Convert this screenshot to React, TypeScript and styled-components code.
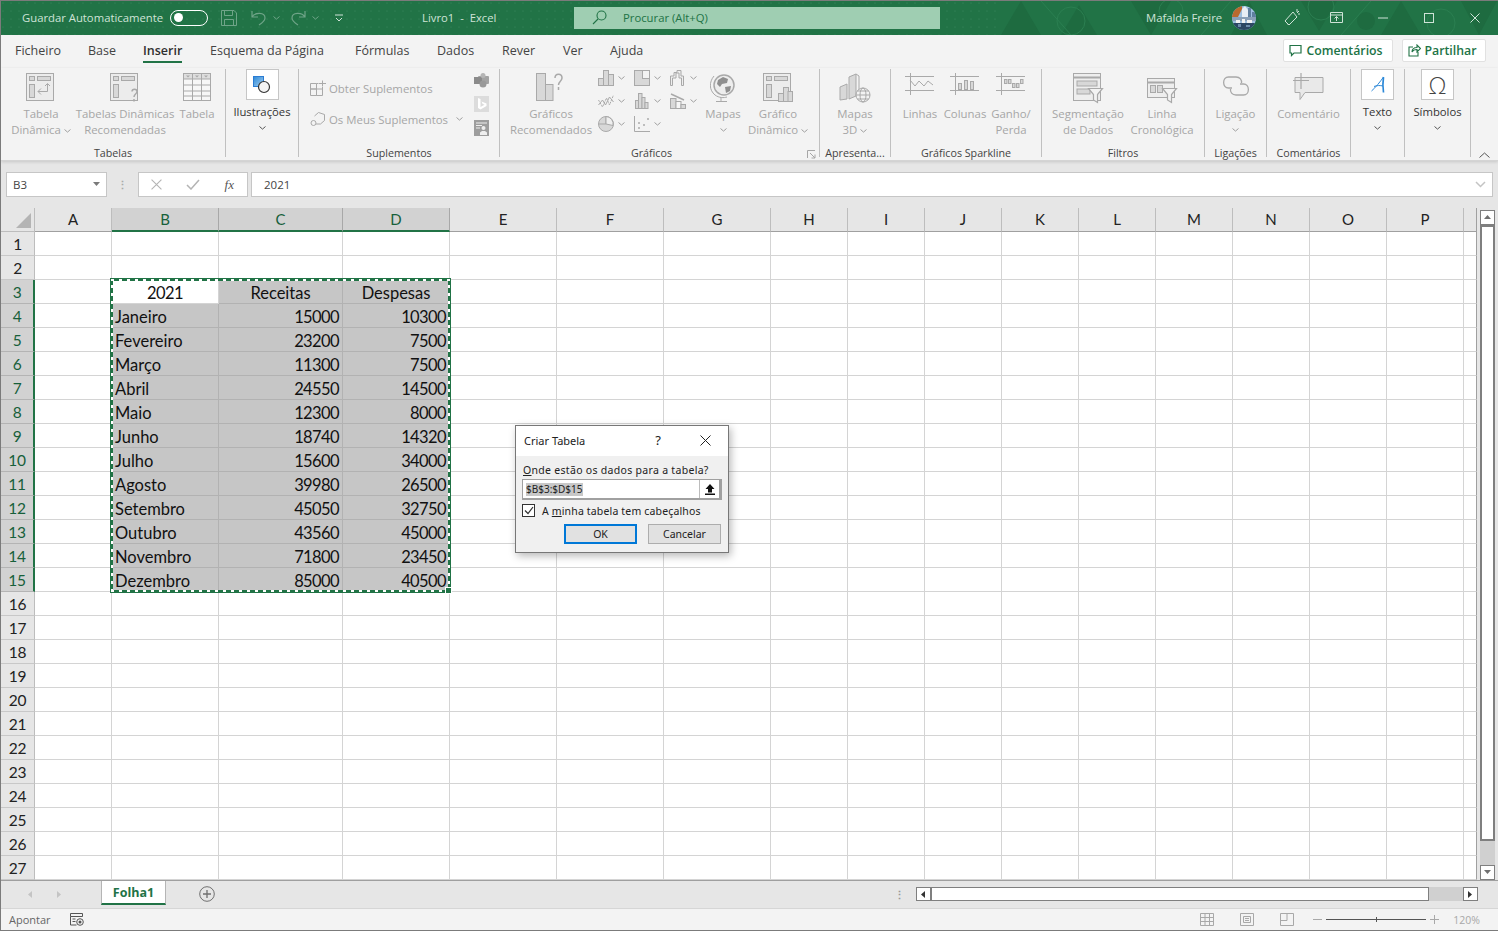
import React from "react";
import styled, { createGlobalStyle } from "styled-components";

const GREEN = "#217346";
const G = "#a9a9a9";
const L = "#d8d8d8";
const UI = `"Open Sans", "Noto Sans", "Liberation Sans", sans-serif`;
const CELL = `Lato, "Liberation Sans", sans-serif`;

const Global = createGlobalStyle`
  html, body { margin: 0; padding: 0; background: #fff; overflow: hidden; }
  * { box-sizing: border-box; }
  svg { display: block; flex: none; }
`;

const Frame = styled.div`
  position: relative;
  width: 1498px;
  height: 931px;
  display: flex;
  flex-direction: column;
  border-top: 1px solid #7b7b7b;
  border-left: 1px solid #7b7b7b;
  border-bottom: 1px solid #7b7b7b;
  font-family: ${UI};
  overflow: hidden;
`;

/* title bar */
const TitleBar = styled.div`
  position: relative;
  flex: none;
  height: 34px;
  background: ${GREEN};
  display: flex;
  align-items: center;
  color: #cfe3d7;
  font-size: 11.3px;
`;
const Texture = styled.svg`
  position: absolute;
  inset: 0;
  width: 100%;
  height: 100%;
`;
const TitleSlot = styled.div<{ $w: number }>`
  position: relative;
  flex: none;
  width: ${(p) => p.$w}px;
  display: flex;
  align-items: center;
  gap: 6px;
  white-space: pre;
  padding-bottom: 1px;
`;
const Toggle = styled.div`
  width: 38px;
  height: 16px;
  border: 1.5px solid #fff;
  border-radius: 8px;
  display: flex;
  align-items: center;
  padding-left: 3px;
  &::before {
    content: "";
    width: 9px;
    height: 9px;
    border-radius: 50%;
    background: #fff;
  }
`;
const SearchBox = styled.div`
  position: relative;
  flex: none;
  width: 366px;
  height: 22px;
  background: #9fceb2;
  color: ${GREEN};
  display: flex;
  align-items: center;
  gap: 16px;
  padding: 0 0 1px 18px;
`;

/* tabs */
const TabRow = styled.div`
  flex: none;
  height: 33px;
  background: #f3f3f3;
  display: flex;
  align-items: flex-start;
  padding-left: 14px;
`;
const Tab = styled.div<{ $w: number }>`
  flex: none;
  width: ${(p) => p.$w}px;
  height: 33px;
  font-size: 12.5px;
  color: #444;
`;
const TabLabel = styled.span<{ $active?: boolean }>`
  display: inline-block;
  height: 28px;
  line-height: 31px;
  font-weight: ${(p) => (p.$active ? 600 : 400)};
  color: ${(p) => (p.$active ? "#2f2f2f" : "#444")};
  border-bottom: ${(p) => (p.$active ? `2.5px solid ${GREEN}` : "none")};
`;
const TabActions = styled.div`
  margin-left: auto;
  display: flex;
  gap: 9px;
  padding: 4px 12px 0 0;
`;
const TabAction = styled.div<{ $w: number }>`
  width: ${(p) => p.$w}px;
  height: 23px;
  background: #fff;
  border: 1px solid #e1e1e1;
  border-radius: 2px;
  color: ${GREEN};
  font-size: 12.3px;
  font-weight: 600;
  display: flex;
  align-items: center;
  justify-content: center;
  gap: 4px;
  padding-right: 4px;
`;

/* ribbon */
const Ribbon = styled.div`
  flex: none;
  height: 93px;
  background: #f3f3f3;
  display: flex;
  padding-top: 1px;
  border-bottom: 1px solid #d4d4d4;
  box-shadow: 0 1px 3px rgba(0, 0, 0, 0.14);
  z-index: 2;
`;
const Group = styled.div<{ $w: number; $plain?: boolean }>`
  position: relative;
  flex: none;
  width: ${(p) => p.$w}px;
  height: 88px;
  display: flex;
  flex-direction: column;
  border-right: ${(p) => (p.$plain ? "none" : "1px solid #c0c0c0")};
`;
const GroupBody = styled.div<{ $pl?: number }>`
  flex: none;
  height: 77px;
  display: flex;
  padding-left: ${(p) => p.$pl ?? 0}px;
`;
const GroupLabel = styled.div<{ $pr?: number }>`
  height: 11px;
  line-height: 14px;
  font-size: 10.7px;
  color: #444;
  text-align: center;
  white-space: nowrap;
  padding-right: ${(p) => p.$pr ?? 0}px;
`;
const Launcher = styled.svg`
  position: absolute;
  right: 3px;
  bottom: -2px;
`;
const BigButton = styled.div<{ $w: number }>`
  flex: none;
  width: ${(p) => p.$w}px;
  display: flex;
  flex-direction: column;
  align-items: center;
`;
const IconSlot = styled.div`
  height: 37px;
  display: flex;
  align-items: flex-start;
  justify-content: center;
  padding-top: 4px;
`;
const BigText = styled.div`
  font-size: 11.4px;
  line-height: 16px;
  color: #a6a6a6;
  text-align: center;
  white-space: nowrap;
  svg { display: inline-block; margin-left: 3px; vertical-align: middle; }
`;
const ChevRow = styled.div`
  height: 16px;
  display: flex;
  align-items: center;
  justify-content: center;
`;
const BoxedButton = styled.div<{ $w: number }>`
  flex: none;
  width: ${(p) => p.$w}px;
  display: flex;
  flex-direction: column;
  align-items: center;
  color: #333;
  font-size: 11.3px;
`;
const WhiteBox = styled.div`
  width: 33px;
  height: 31px;
  background: #fff;
  border: 1px solid #c6c6c6;
  display: flex;
  align-items: center;
  justify-content: center;
  margin-bottom: 4px;
  font-family: ${UI};
  font-weight: 300;
  font-size: 23px;
  color: #444;
`;
const BoxedText = styled.div`
  line-height: 16px;
  white-space: nowrap;
`;
const AddinList = styled.div`
  flex: 1;
  display: flex;
  flex-direction: column;
  gap: 15px;
  padding: 11px 0 0 11px;
`;
const AddinRow = styled.div`
  height: 16px;
  display: flex;
  align-items: center;
  gap: 3px;
  font-size: 11.4px;
  color: #a6a6a6;
  white-space: nowrap;
`;
const AddinSide = styled.div`
  flex: none;
  width: 25px;
  display: flex;
  flex-direction: column;
  gap: 8px;
  padding-top: 4px;
`;
const MiniGrid = styled.div`
  flex: none;
  width: 106px;
  height: 72px;
  margin-top: -3px;
  display: grid;
  grid-template-columns: repeat(3, 36px);
  grid-auto-rows: 23px;
`;
const MiniChart = styled.div`
  display: flex;
  align-items: center;
  gap: 4px;
`;
const CollapseTab = styled.div`
  flex: 1;
  display: flex;
  align-items: flex-end;
  justify-content: flex-end;
  padding: 0 8px 0 0;
  height: 89px;
`;

/* formula bar */
const FormulaRow = styled.div`
  flex: none;
  height: 47px;
  background: #e6e6e6;
  display: flex;
  align-items: flex-start;
  padding: 11px 5px 0 5px;
`;
const FormulaBox = styled.div<{ $w?: number }>`
  flex: ${(p) => (p.$w ? "none" : "1")};
  width: ${(p) => (p.$w ? `${p.$w}px` : "auto")};
  height: 25px;
  background: #fff;
  border: 1px solid #c6c6c6;
  display: flex;
  align-items: center;
  justify-content: space-between;
  font-size: 11.5px;
  color: #444;
  padding: 0 6px;
`;
const Grip = styled.div`
  flex: none;
  width: 31px;
  display: flex;
  justify-content: center;
  align-items: center;
  height: 25px;
  color: #aaa;
  font-size: 11px;
  font-weight: 700;
`;
const FxButtons = styled(FormulaBox)`
  margin-right: 3px;
  padding: 0 13px 0 12px;
`;
const FxMark = styled.i`
  font-family: "Liberation Serif", serif;
  font-size: 13px;
  color: #555;
`;
const FormulaText = styled.span`
  padding-left: 6px;
  font-size: 11.5px;
`;

/* sheet */
const Main = styled.div`
  flex: none;
  height: 672px;
  display: flex;
  background: #e6e6e6;
`;
const Sheet = styled.div`
  position: relative;
  flex: none;
  width: 1476px;
  display: grid;
  grid-template-columns: 34px 77px 107px 124px 107px 107px 107px 107px repeat(9, 77px) 1fr;
  grid-auto-rows: 24px;
  background: #fff;
  font-family: ${CELL};
  font-size: 16.5px;
  color: #111;
`;
const Corner = styled.div`
  background: #e6e6e6;
  border-right: 1px solid #bdbdbd;
  border-bottom: 1px solid #bdbdbd;
  display: flex;
  align-items: flex-end;
  justify-content: flex-end;
  padding: 0 3px 3px 0;
`;
const ColHead = styled.div<{ $on?: boolean }>`
  background: ${(p) => (p.$on ? "#d2d2d2" : "#e6e6e6")};
  color: ${(p) => (p.$on ? "#17603a" : "#222")};
  border-right: 1px solid ${(p) => (p.$on ? "#a8a8a8" : "#bdbdbd")};
  border-bottom: ${(p) => (p.$on ? `2px solid ${GREEN}` : "1px solid #a0a0a0")};
  display: flex;
  align-items: center;
  justify-content: center;
  padding-bottom: 1px;
  font-size: 15px;
`;
const ColFill = styled.div`
  background: #e6e6e6;
  border-bottom: 1px solid #a0a0a0;
  border-right: 1px solid #a0a0a0;
`;
const RowHead = styled.div<{ $on?: boolean }>`
  background: ${(p) => (p.$on ? "#d2d2d2" : "#e6e6e6")};
  color: ${(p) => (p.$on ? "#17603a" : "#222")};
  border-right: ${(p) => (p.$on ? `2px solid ${GREEN}` : "1px solid #bdbdbd")};
  border-bottom: 1px solid ${(p) => (p.$on ? "#b4b4b4" : "#c8c8c8")};
  display: flex;
  align-items: center;
  justify-content: center;
  font-size: 15.5px;
  letter-spacing: -0.3px;
`;
const Cell = styled.div<{ $sel?: boolean; $align?: string; $num?: boolean }>`
  background: ${(p) => (p.$sel ? "#c6c6c6" : "#fff")};
  border-right: 1px solid ${(p) => (p.$sel ? "#b2b2b2" : "#d4d4d4")};
  border-bottom: 1px solid ${(p) => (p.$sel ? "#b2b2b2" : "#d4d4d4")};
  display: flex;
  align-items: center;
  justify-content: ${(p) => p.$align ?? "flex-start"};
  padding: 2px 3px 0;
  white-space: nowrap;
  letter-spacing: ${(p) => (p.$num ? "-0.6px" : "0")};
`;
const CellFill = styled.div`
  background: #fff;
  border-right: 1px solid #a0a0a0;
  border-bottom: 1px solid #d4d4d4;
`;
const Ants = styled.div`
  position: absolute;
  left: 109px;
  top: 70px;
  width: 341px;
  height: 315px;
  border: 3px solid ${GREEN};
  pointer-events: none;
  &::before {
    content: "";
    position: absolute;
    inset: -2px;
    background:
      repeating-linear-gradient(90deg, #fff 0 3px, transparent 3px 8px) top left / 100% 2px no-repeat,
      repeating-linear-gradient(90deg, #fff 0 3px, transparent 3px 8px) bottom left / 100% 2px no-repeat,
      repeating-linear-gradient(0deg, #fff 0 3px, transparent 3px 8px) top left / 2px 100% no-repeat,
      repeating-linear-gradient(0deg, #fff 0 3px, transparent 3px 8px) top right / 2px 100% no-repeat;
  }
  &::after {
    content: "";
    position: absolute;
    right: -4px;
    bottom: -4px;
    width: 5px;
    height: 5px;
    background: ${GREEN};
    border: 1px solid #fff;
  }
`;

/* scrollbars */
const VScroll = styled.div`
  flex: none;
  width: 21px;
  display: flex;
  flex-direction: column;
  padding: 2px 0 0 3px;
`;
const ScrollBtn = styled.div`
  flex: none;
  width: 15px;
  height: 15px;
  background: #fff;
  border: 1px solid #7f7f7f;
  display: flex;
  align-items: center;
  justify-content: center;
`;
const VThumb = styled.div`
  flex: none;
  width: 15px;
  height: 616px;
  background: #fff;
  border: 2px solid #7f7f7f;
  border-top-width: 2px;
`;
const VTrack = styled.div`
  flex: none;
  width: 15px;
  height: 24px;
  background: #d0d0d0;
`;
const SheetBar = styled.div`
  flex: none;
  height: 28px;
  background: #e6e6e6;
  border-top: 1px solid #9f9f9f;
  display: flex;
  align-items: flex-start;
`;
const SheetNav = styled.div`
  flex: none;
  width: 100px;
  height: 26px;
  display: flex;
  align-items: center;
  gap: 22px;
  padding-left: 26px;
`;
const SheetTab = styled.div`
  flex: none;
  width: 65px;
  height: 24px;
  background: #fff;
  border: 1px solid #b5b5b5;
  border-top: none;
  border-bottom: 2px solid ${GREEN};
  color: ${GREEN};
  font-size: 12.5px;
  font-weight: 700;
  display: flex;
  align-items: center;
  justify-content: center;
`;
const AddSheet = styled.div`
  flex: none;
  width: 84px;
  height: 26px;
  display: flex;
  align-items: center;
  padding-left: 33px;
`;
const HScrollArea = styled.div`
  flex: 1;
  display: flex;
  align-items: center;
  height: 26px;
  padding: 0 20px 0 0;
`;
const Splitter = styled.div`
  margin-left: auto;
  width: 22px;
  color: #999;
  font-size: 11px;
  font-weight: 700;
`;
const HBtn = styled(ScrollBtn)`
  height: 14px;
`;
const HThumb = styled.div`
  flex: none;
  width: 498px;
  height: 14px;
  background: #fff;
  border: 1px solid #7f7f7f;
`;
const HTrack = styled.div`
  flex: none;
  width: 34px;
  height: 14px;
  background: #d0d0d0;
`;

/* status bar */
const StatusBar = styled.div`
  flex: 1;
  background: #f3f3f3;
  border-top: 1px solid #d6d6d6;
  display: flex;
  align-items: center;
  padding: 0 0 0 8px;
  font-size: 11px;
  color: #666;
`;
const StatusText = styled.span`
  width: 61px;
`;
const StatusRight = styled.div`
  margin-left: auto;
  display: flex;
  align-items: center;
  padding-right: 18px;
  font-size: 10.5px;
  color: #a8a8a8;
`;
const ViewIcons = styled.div`
  display: flex;
  gap: 26px;
  margin-right: 19px;
`;
const Zoom = styled.div`
  display: flex;
  align-items: center;
  gap: 4px;
  margin-right: 14px;
`;
const ZoomTrack = styled.div`
  position: relative;
  width: 100px;
  height: 1px;
  background: #555;
  &::after {
    content: "";
    position: absolute;
    left: 50px;
    top: -2px;
    width: 1px;
    height: 5px;
    background: #555;
  }
`;

/* dialog */
const Dialog = styled.div`
  position: absolute;
  left: 514px;
  top: 424px;
  width: 214px;
  height: 128px;
  background: #f0f0f0;
  border: 1px solid #777;
  box-shadow: 2px 3px 8px rgba(0, 0, 0, 0.28);
  display: flex;
  flex-direction: column;
  font-family: "Noto Sans", "Open Sans", sans-serif;
  font-size: 10.5px;
  color: #222;
  z-index: 5;
`;
const DialogHead = styled.div`
  height: 30px;
  background: #fff;
  display: flex;
  align-items: center;
  padding: 0 0 2px 8px;
  font-size: 11px;
`;
const HelpMark = styled.span`
  margin-left: auto;
  margin-right: 39px;
  font-size: 13px;
`;
const CloseMark = styled.svg`
  margin-right: 17px;
`;
const DialogBody = styled.div`
  padding: 6px 7px 0 6px;
  display: flex;
  flex-direction: column;
`;
const DialogLabel = styled.div`
  padding-left: 1px;
  height: 17px;
  line-height: 16px;
  letter-spacing: 0.3px;
  white-space: nowrap;
`;
const RangeField = styled.div`
  flex: none;
  width: 200px;
  height: 21px;
  background: #fff;
  border: 1px solid #a0a0a0;
  border-right-width: 3px;
  border-bottom-width: 2px;
  display: flex;
  align-items: center;
  padding-left: 3px;
`;
const RangeText = styled.span`
  background: #c8c8c8;
  font-size: 10px;
  line-height: 13px;
`;
const RangeBtn = styled.div`
  margin-left: auto;
  width: 20px;
  height: 100%;
  border-left: 1px solid #bcbcbc;
  display: flex;
  align-items: center;
  justify-content: center;
`;
const CheckRow = styled.div`
  display: flex;
  align-items: center;
  gap: 7px;
  margin-top: 3px;
  height: 15px;
  letter-spacing: 0.16px;
  white-space: nowrap;
`;
const CheckBox = styled.div`
  width: 13px;
  height: 13px;
  background: #fff;
  border: 1px solid #333;
  display: flex;
  align-items: center;
  justify-content: center;
`;
const DialogButtons = styled.div`
  display: flex;
  justify-content: flex-end;
  gap: 11px;
  margin-top: 6px;
`;
const DlgButton = styled.div<{ $primary?: boolean }>`
  width: 73px;
  height: 20px;
  background: #e1e1e1;
  border: ${(p) => (p.$primary ? "2px solid #0078d7" : "1px solid #adadad")};
  display: flex;
  align-items: center;
  justify-content: center;
`;
const Key = styled.u`
  text-decoration: underline;
`;

/* icons */
const Chev = ({ c = "#a0a0a0" }: { c?: string }) => (
  <svg width="7" height="4" viewBox="0 0 7 4" style={{ display: "inline-block" }}>
    <path d="M.5.5l3 2.6 3-2.6" fill="none" stroke={c} />
  </svg>
);
const PivotBase = ({ children }: { children?: React.ReactNode }) => (
  <svg width="30" height="30" viewBox="0 0 30 30" fill="none" stroke={G}>
    <rect x=".5" y=".5" width="27" height="27" fill="#ececec" />
    <rect x="3.5" y="3.5" width="5" height="4" fill={L} />
    <rect x="11.5" y="3.5" width="13" height="4" fill={L} />
    <rect x="3.5" y="11.5" width="5" height="13" fill={L} />
    {children}
  </svg>
);
const PivotIcon = () => (
  <PivotBase>
    <path d="M21.5 11v7.5H12M15 15.5l-3 3 3 3M19 13l2.5-2.5L24 13" />
  </PivotBase>
);
const RecIcon = () => (
  <PivotBase>
    <path d="M22 18.500c0-3 5-3 5 0 0 2.500-3 2.500-3 5.500M24 26v2.500" strokeWidth="1.500" />
  </PivotBase>
);
const TableIcon = () => (
  <svg width="28" height="28" viewBox="0 0 28 28" fill="none" stroke={G}>
    <rect x=".5" y=".5" width="27" height="27" fill="#f7f7f7" />
    <rect x=".5" y=".5" width="27" height="5.500" fill="#dedede" />
    <path d="M.5 12h27M.5 18h27M.5 23h27M9.500 0v28M18.500 0v28" />
    <path d="M3 2.500h4L5 4.500zM12 2.500h4l-2 2zM21 2.500h4l-2 2z" fill={G} stroke="none" />
  </svg>
);
const ShapesIcon = () => (
  <svg width="18" height="18" viewBox="0 0 18 18">
    <defs>
      <linearGradient id="sq" x1="0" y1="0" x2="1" y2="1">
        <stop offset="0" stopColor="#2b88d8" />
        <stop offset="1" stopColor="#a6d0ef" />
      </linearGradient>
    </defs>
    <rect x=".5" y=".5" width="10" height="10" fill="url(#sq)" stroke="#2b7cd3" />
    <circle cx="11" cy="11" r="5.500" fill="#f3f3f3" stroke="#333" strokeWidth="1.200" />
  </svg>
);
const StoreIcon = () => (
  <svg width="16" height="16" viewBox="0 0 16 16" fill="none" stroke={G}>
    <path d="M.5 3.500h6v5.500h-6zM.5 9h6v6.500h-6zM6.500 9h6v6.500h-6zM6.500 3.500h2M12.500 9V7M12.500 .5v6M9 3.500h7" />
  </svg>
);
const MyAddinIcon = () => (
  <svg width="16" height="16" viewBox="0 0 16 16" fill="none" stroke={G}>
    <path d="M4.500 5l4-3.500 6 2v6l-4 3.500H6" />
    <circle cx="3.500" cy="12" r="2.500" />
  </svg>
);
const VisioIcon = () => (
  <svg width="15" height="15" viewBox="0 0 15 15">
    <rect x="4" y="3" width="11" height="8" rx="1" fill="#a3a3a3" />
    <rect x="0" y="4" width="8" height="7" fill="#8a8a8a" />
    <circle cx="9" cy="11" r="3.500" fill="#999" />
    <circle cx="9" cy="2.500" r="2.500" fill="#b5b5b5" />
  </svg>
);
const BingIcon = () => (
  <svg width="15" height="16" viewBox="0 0 15 16">
    <rect width="15" height="16" fill="#dcdcdc" />
    <path d="M4 2l2.500 1v8l4-2.300-2-1L7.500 5.500l5 2V10l-6 3.500L4 12z" fill="#fff" />
  </svg>
);
const PeopleIcon = () => (
  <svg width="15" height="16" viewBox="0 0 15 16">
    <rect width="15" height="16" fill="#9d9d9d" />
    <path d="M2 3h11M2 5.500h6M2 8h4" stroke="#eee" />
    <circle cx="9.500" cy="8" r="2" fill="#eee" />
    <path d="M6 15v-2.500l2-1.500h3l2 1.500V15z" fill="#eee" />
  </svg>
);
const RecChartIcon = () => (
  <svg width="31" height="30" viewBox="0 0 31 30" fill={L} stroke={G}>
    <rect x=".5" y=".5" width="9" height="27" />
    <rect x="9.500" y="11.500" width="7.500" height="16" />
    <path d="M19 5c0-5 7-5 7 0 0 3-3.500 3.500-3.500 7M22.500 14v3" fill="none" strokeWidth="1.500" />
  </svg>
);
const Mini = ({ kind }: { kind: number }) => {
  const shapes: Record<number, React.ReactNode> = {
    0: (
      <g fill={L} stroke={G}>
        <rect x=".5" y="8.500" width="5" height="7" />
        <rect x="5.500" y=".5" width="5" height="15" />
        <rect x="10.500" y="4.500" width="5" height="11" />
      </g>
    ),
    1: (
      <g fill={L} stroke={G}>
        <rect x=".5" y=".5" width="15" height="15" />
        <rect x="8.500" y=".5" width="7" height="8" fill="#f3f3f3" />
      </g>
    ),
    2: (
      <path d="M.5 15.500V6h3.500V2.500h3V.5h4V6h2.500v9.500h-2V8H9V3H6v5H2.500v7.500z" fill="#eee" stroke={G} />
    ),
    3: (
      <g fill="none" stroke={G}>
        <path d="M.5 12l4-5 3 5 4-8 4 5" />
        <path d="M.5 7l4 7 4-9 3 7 4-10" strokeDasharray="2 1" />
      </g>
    ),
    4: (
      <g fill={L} stroke={G}>
        <rect x="1.500" y="7.500" width="3" height="8" />
        <rect x="4.500" y=".5" width="3.500" height="15" />
        <rect x="8" y="4.500" width="3" height="11" />
        <rect x="11" y="9.500" width="3" height="6" />
      </g>
    ),
    5: (
      <g stroke={G} fill={L}>
        <rect x=".5" y="5.500" width="5.500" height="10" />
        <rect x="6" y="8.500" width="5" height="7" fill="#f6f6f6" />
        <rect x="11" y="11.500" width="4.500" height="4" />
        <path d="M1 1l13 6" fill="none" strokeWidth="1.500" />
      </g>
    ),
    6: (
      <g stroke={G}>
        <circle cx="8" cy="8" r="7.500" fill={L} />
        <path d="M8 8V.5M8 8H.5" fill="none" />
        <path d="M8 8V.5a7.500 7.500 0 0 1 7 9z" fill="#efefef" />
      </g>
    ),
    7: (
      <g>
        <path d="M.5 0v15.500H16" fill="none" stroke={G} />
        <g fill="#bdbdbd">
          <rect x="4" y="11" width="2" height="2" />
          <rect x="4" y="6" width="2" height="2" />
          <rect x="9" y="8" width="2" height="2" />
          <rect x="13" y="2" width="2" height="2" />
        </g>
      </g>
    ),
  };
  return (
    <svg width="16" height="16" viewBox="0 0 16 16">
      {shapes[kind]}
    </svg>
  );
};
const GlobeIcon = () => (
  <svg width="26" height="30" viewBox="0 0 26 30" fill="none" stroke={G}>
    <circle cx="14" cy="12" r="10" fill="#ededed" strokeWidth="1.500" />
    <path d="M8 7l5-3 5 2-1 4-5 1-2 3-3-3zM15 14l6-1-1 5-4 2z" fill="#8f8f8f" stroke="none" />
    <path d="M4 3C-1 9-1 17 5 22c4 3 9 3 12 2M11 24v4M6 28.500h11" />
  </svg>
);
const PivotChartIcon = () => (
  <svg width="30" height="30" viewBox="0 0 30 30" fill="none" stroke={G}>
    <rect x=".5" y=".5" width="27" height="27" fill="#ececec" />
    <rect x="3.500" y="3.500" width="5" height="4" fill={L} />
    <rect x="11.500" y="3.500" width="13" height="4" fill={L} />
    <rect x="3.500" y="11.500" width="5" height="13" fill={L} />
    <rect x="15.500" y="20.500" width="5" height="8" fill={L} />
    <rect x="20.500" y="14.500" width="5" height="14" fill={L} />
    <rect x="25" y="18.500" width="4.500" height="10" fill={L} />
  </svg>
);
const Map3DIcon = () => (
  <svg width="32" height="30" viewBox="0 0 32 30" fill="none" stroke={G}>
    <path d="M1 14l7-3v15l-7 1zM10 4l7-3v22l-7 3z" fill={L} />
    <path d="M17 1l3 2v15" />
    <circle cx="24" cy="22" r="7" fill="#f3f3f3" />
    <ellipse cx="24" cy="22" rx="3" ry="7" />
    <path d="M17 22h14M18.500 18h11M18.500 26h11" />
  </svg>
);
const SparkLine = () => (
  <svg width="30" height="24" viewBox="0 0 30 24" fill="none" stroke={G}>
    <path d="M0 3.500h29M0 17.500h29M5.500 0v22" />
    <path d="M5 7l5 6 4-5 5 5 4-5 5 4" />
  </svg>
);
const SparkColumn = () => (
  <svg width="30" height="24" viewBox="0 0 30 24" fill="none" stroke={G}>
    <path d="M0 3.500h29M0 17.500h29M5.500 0v22" />
    <rect x="8.500" y="10.500" width="3" height="6" fill={L} />
    <rect x="14.500" y="7.500" width="3" height="9" fill={L} />
    <rect x="20.500" y="8.500" width="3" height="8" fill={L} />
  </svg>
);
const SparkWin = () => (
  <svg width="30" height="24" viewBox="0 0 30 24" fill="none" stroke={G}>
    <path d="M0 17.500h29M0 3.500h29M5.500 0v22" />
    <rect x="8.500" y="6.500" width="2.500" height="4" fill={L} />
    <rect x="12.500" y="6.500" width="2.500" height="4" fill={L} />
    <rect x="16.500" y="10.500" width="2.500" height="4" fill={L} />
    <rect x="20.500" y="10.500" width="2.500" height="4" fill={L} />
    <rect x="24.500" y="6.500" width="2.500" height="4" fill={L} />
  </svg>
);
const Funnel = ({ x, y }: { x: number; y: number }) => (
  <path
    transform={`translate(${x} ${y})`}
    d="M.5.5h14l-5 6v8l-4-2.500V6.500z"
    fill="#f3f3f3"
    stroke={G}
    strokeWidth="1.200"
  />
);
const SlicerIcon = () => (
  <svg width="31" height="31" viewBox="0 0 31 31" fill="none" stroke={G}>
    <rect x=".5" y=".5" width="27" height="27" fill="#eee" />
    <path d="M.5 4.500h27" strokeWidth="2" />
    <rect x="4" y="8" width="20" height="5" fill={L} />
    <rect x="4" y="16" width="13" height="5" fill={L} />
    <Funnel x={15} y={15} />
  </svg>
);
const TimelineIcon = () => (
  <svg width="31" height="31" viewBox="0 0 31 31" fill="none" stroke={G}>
    <rect x=".5" y="5.500" width="27" height="19" fill="#eee" />
    <path d="M.5 9.500h27" strokeWidth="2" />
    <rect x="3.500" y="12.500" width="5" height="7" fill={L} />
    <rect x="10.500" y="12.500" width="5" height="7" fill={L} />
    <Funnel x={15} y={15} />
  </svg>
);
const LinkIcon = () => (
  <svg width="30" height="26" viewBox="0 0 30 26" fill="none" stroke={G} strokeWidth="1.300">
    <path d="M11 15H7.500C1 15 1 4 7.500 4H15c4 0 6 3 5.500 6" />
    <path d="M19 11h3.500C29 11 29 22 22.500 22H15c-4 0-6-3-5.500-6" />
  </svg>
);
const CommentIcon = () => (
  <svg width="32" height="30" viewBox="0 0 32 30" fill="none" stroke={G}>
    <path d="M2 4.500h28v15H12l-5 7v-7H2z" fill="#e9e9e9" />
    <path d="M0 7.500h16M8 0v16" strokeWidth="1.200" />
  </svg>
);
const TextAIcon = () => (
  <svg width="14" height="17" viewBox="0 0 14 17" fill="none" stroke="#2b88d8">
    <path d="M.5 15C5 11 9 6 12.500 1" strokeWidth="1" />
    <path d="M12.500 1c-.8 5-.8 10 0 15.500" strokeWidth="1.700" />
    <path d="M3 10.500c3-1.200 6-1.200 9-.5" strokeWidth="1" />
  </svg>
);
const MagnifierIcon = () => (
  <svg width="15" height="15" viewBox="0 0 15 15" fill="none" stroke={GREEN} strokeWidth="1.100">
    <circle cx="9.500" cy="5.500" r="4.500" />
    <path d="M6 9l-5 5" />
  </svg>
);
const BalloonIcon = () => (
  <svg width="13" height="13" viewBox="0 0 13 13" fill="none" stroke={GREEN} strokeWidth="1.200">
    <path d="M1 1.500h11v7.500H5L2.500 11.500V9H1z" />
  </svg>
);
const ShareIcon = () => (
  <svg width="13" height="13" viewBox="0 0 13 13" fill="none" stroke={GREEN} strokeWidth="1.100">
    <path d="M5 3H1v9h9V8M4 8c0-3 2-4.500 5-4.500V1l3.500 3.500L9 8V5.500C7 5.500 5 6 4 8z" />
  </svg>
);
const Avatar = () => (
  <svg width="24" height="24" viewBox="0 0 24 24">
    <clipPath id="av">
      <circle cx="12" cy="12" r="12" />
    </clipPath>
    <g clipPath="url(#av)">
      <rect width="24" height="24" fill="#9fc0e0" />
      <path d="M0 0h10v3L6 11H0z" fill="#b9692e" />
      <path d="M10 3l3-3 3 4v9h-6z" fill="#e8eef5" />
      <path d="M16 2h3v10h-3zM20 6h4v8h-4z" fill="#5f7f9f" />
      <rect y="11" width="24" height="4" fill="#8aa0b8" />
      <path d="M4 14h4v3H4zM10 13h3v4h-3zM15 14h5v3h-5z" fill="#f2f2f2" />
      <rect y="17" width="24" height="7" fill="#2c4763" />
      <path d="M6 18h3v3H6zM14 19h4v2h-4z" fill="#6d8cab" />
    </g>
  </svg>
);
const T = "#cfe3d7";
const SaveIcon = () => (
  <svg width="16" height="16" viewBox="0 0 16 16" fill="none" stroke="#6fa488">
    <path d="M.5.500h12.500l2.500 2.500v12.500H.5zM3.500.5v5h8v-5M3.500 15.500v-6h9v6" />
  </svg>
);
const UndoIcon = ({ flip }: { flip?: boolean }) => (
  <svg width="16" height="16" viewBox="0 0 16 16" fill="none" stroke="#6fa488" strokeWidth="1.200" style={flip ? { transform: "scaleX(-1)" } : undefined}>
    <path d="M1 1v6h6M1 7c3-5 13-5 13 1 0 3-3 5-6 7" />
  </svg>
);
const CustomIcon = () => (
  <svg width="8" height="8" viewBox="0 0 8 8" fill="none" stroke={T}>
    <path d="M0 1h8M1 4l3 3 3-3" />
  </svg>
);
const WandIcon = () => (
  <svg width="17" height="19" viewBox="0 0 17 19" fill="none" stroke={T}>
    <path d="M1 13L9 4l4 5-8 8zM3 15l1.500 2M13 1v3M15 3l-2 2M16 6h-2" />
  </svg>
);
const DisplayIcon = () => (
  <svg width="13" height="12" viewBox="0 0 13 12" fill="none" stroke={T}>
    <path d="M.5.500h12v10H.5zM.5 3h12M6.500 9V4.500M4.500 6.500l2-2 2 2" />
  </svg>
);
const MinIcon = () => (
  <svg width="10" height="2" viewBox="0 0 10 2">
    <path d="M0 1h10" stroke={T} />
  </svg>
);
const MaxIcon = () => (
  <svg width="10" height="10" viewBox="0 0 10 10">
    <rect x=".5" y=".5" width="9" height="9" fill="none" stroke={T} />
  </svg>
);
const CloseIcon = ({ c = T, s = 10 }: { c?: string; s?: number }) => (
  <svg width={s} height={s} viewBox="0 0 10 10">
    <path d="M.5.500l9 9M9.500.500l-9 9" stroke={c} fill="none" />
  </svg>
);
const Tri = ({ dir, c = "#707070" }: { dir: "u" | "d" | "l" | "r"; c?: string }) => {
  const d = { u: "M0 5l3.500-4L7 5z", d: "M0 1h7L3.500 5z", l: "M5 0v7L1 3.500z", r: "M1 0v7l4-3.500z" }[dir];
  return (
    <svg width="7" height="7" viewBox="0 0 7 7">
      <path d={d} fill={c} />
    </svg>
  );
};

const TitleTexture = () => (
  <Texture viewBox="0 0 1497 34" preserveAspectRatio="none">
    <defs>
      <pattern id="dots" width="8" height="8" patternUnits="userSpaceOnUse">
        <circle cx="2" cy="2" r=".6" fill="#3c8a5f" />
      </pattern>
    </defs>
    <rect width="1000" height="34" fill="url(#dots)" />
    <g fill="#1e6b40">
      <path d="M1000 34l20-34 20 34zM1060 34l18-30 18 30zM1130 0l20 34 20-34zM1230 34l18-34 18 34zM1300 0l18 30 18-30zM1380 34l20-34 20 34zM1460 0l18 34 18-34z" />
      <circle cx="1365" cy="20" r="9" />
    </g>
    <g fill="none" stroke="#2b7f51">
      <circle cx="1070" cy="20" r="14" />
      <circle cx="1170" cy="10" r="12" />
      <circle cx="1320" cy="6" r="13" />
      <circle cx="1440" cy="22" r="14" />
      <path d="M1040 0l30 34M1200 34l30-34M1340 34l30-34" />
    </g>
  </Texture>
);

const Big = ({ icon, lines, w, chev }: { icon: React.ReactNode; lines: string[]; w: number; chev?: "inline" | "row" }) => (
  <BigButton $w={w}>
    <IconSlot>{icon}</IconSlot>
    {lines.map((line, i) => (
      <BigText key={line}>
        {line}
        {chev === "inline" && i === lines.length - 1 && <Chev />}
      </BigText>
    ))}
    {chev === "row" && (
      <ChevRow>
        <Chev />
      </ChevRow>
    )}
  </BigButton>
);

const Boxed = ({ icon, label, w }: { icon: React.ReactNode; label: string; w: number }) => (
  <BoxedButton $w={w}>
    <WhiteBox>{icon}</WhiteBox>
    <BoxedText>{label}</BoxedText>
    <ChevRow>
      <Chev c="#555" />
    </ChevRow>
  </BoxedButton>
);

const tabs = [
  ["Ficheiro", 73],
  ["Base", 55],
  ["Inserir", 67],
  ["Esquema da Página", 145],
  ["Fórmulas", 82],
  ["Dados", 65],
  ["Rever", 61],
  ["Ver", 47],
  ["Ajuda", 40],
] as const;

const columns = "ABCDEFGHIJKLMNOP".split("");
const table: [string, number, number][] = [
  ["Janeiro", 15000, 10300],
  ["Fevereiro", 23200, 7500],
  ["Março", 11300, 7500],
  ["Abril", 24550, 14500],
  ["Maio", 12300, 8000],
  ["Junho", 18740, 14320],
  ["Julho", 15600, 34000],
  ["Agosto", 39980, 26500],
  ["Setembro", 45050, 32750],
  ["Outubro", 43560, 45000],
  ["Novembro", 71800, 23450],
  ["Dezembro", 85000, 40500],
];

const cellAt = (row: number, col: number) => {
  if (row === 3) {
    const text = ["2021", "Receitas", "Despesas"][col - 1];
    return text ? { text, align: "center", sel: col > 1, num: col === 1 } : null;
  }
  if (row >= 4 && row <= 15 && col >= 1 && col <= 3) {
    const rec = table[row - 4];
    return { text: String(rec[col - 1]), align: col === 1 ? "flex-start" : "flex-end", sel: true, num: col > 1 };
  }
  return null;
};

const Grid = () => {
  const rows = Array.from({ length: 27 }, (_, i) => i + 1);
  return (
    <Sheet>
      <Corner>
        <svg width="15" height="15" viewBox="0 0 15 15">
          <path d="M15 0v15H0z" fill="#b4b4b4" />
        </svg>
      </Corner>
      {columns.map((c, i) => (
        <ColHead key={c} $on={i >= 1 && i <= 3}>
          {c}
        </ColHead>
      ))}
      <ColFill />
      {rows.map((r) => (
        <React.Fragment key={r}>
          <RowHead $on={r >= 3 && r <= 15}>{r}</RowHead>
          {columns.map((c, i) => {
            const cell = cellAt(r, i);
            return (
              <Cell key={c} $sel={cell?.sel} $align={cell?.align} $num={cell?.num}>
                {cell?.text}
              </Cell>
            );
          })}
          <CellFill />
        </React.Fragment>
      ))}
      <Ants />
    </Sheet>
  );
};

export default function App() {
  return (
    <>
      <Global />
      <Frame>
        <TitleBar>
          <TitleTexture />
          <TitleSlot $w={21} />
          <TitleSlot $w={148}>Guardar Automaticamente</TitleSlot>
          <TitleSlot $w={51}>
            <Toggle />
          </TitleSlot>
          <TitleSlot $w={30}>
            <SaveIcon />
          </TitleSlot>
          <TitleSlot $w={39}>
            <UndoIcon />
            <Chev c="#6fa488" />
          </TitleSlot>
          <TitleSlot $w={45}>
            <UndoIcon flip />
            <Chev c="#6fa488" />
          </TitleSlot>
          <TitleSlot $w={87}>
            <CustomIcon />
          </TitleSlot>
          <TitleSlot $w={152}>{"Livro1  -  Excel"}</TitleSlot>
          <SearchBox>
            <MagnifierIcon />
            Procurar (Alt+Q)
          </SearchBox>
          <TitleSlot $w={206} />
          <TitleSlot $w={86}>Mafalda Freire</TitleSlot>
          <TitleSlot $w={52}>
            <Avatar />
          </TitleSlot>
          <TitleSlot $w={46}>
            <WandIcon />
          </TitleSlot>
          <TitleSlot $w={48}>
            <DisplayIcon />
          </TitleSlot>
          <TitleSlot $w={46}>
            <MinIcon />
          </TitleSlot>
          <TitleSlot $w={46}>
            <MaxIcon />
          </TitleSlot>
          <TitleSlot $w={10}>
            <CloseIcon />
          </TitleSlot>
        </TitleBar>

        <TabRow>
          {tabs.map(([name, w]) => (
            <Tab key={name} $w={w}>
              <TabLabel $active={name === "Inserir"}>{name}</TabLabel>
            </Tab>
          ))}
          <TabActions>
            <TabAction $w={110}>
              <BalloonIcon />
              Comentários
            </TabAction>
            <TabAction $w={84}>
              <ShareIcon />
              Partilhar
            </TabAction>
          </TabActions>
        </TabRow>

        <Ribbon>
          <Group $w={225}>
            <GroupBody>
              <Big w={80} icon={<PivotIcon />} lines={["Tabela", "Dinâmica"]} chev="inline" />
              <Big w={88} icon={<RecIcon />} lines={["Tabelas Dinâmicas", "Recomendadas"]} />
              <Big w={56} icon={<TableIcon />} lines={["Tabela"]} />
            </GroupBody>
            <GroupLabel>Tabelas</GroupLabel>
          </Group>
          <Group $w={73}>
            <GroupBody>
              <Boxed w={72} icon={<ShapesIcon />} label="Ilustrações" />
            </GroupBody>
            <GroupLabel />
          </Group>
          <Group $w={201}>
            <GroupBody>
              <AddinList>
                <AddinRow>
                  <StoreIcon />
                  Obter Suplementos
                </AddinRow>
                <AddinRow>
                  <MyAddinIcon />
                  Os Meus Suplementos
                  <span style={{ width: 2 }} />
                  <Chev />
                </AddinRow>
              </AddinList>
              <AddinSide>
                <VisioIcon />
                <BingIcon />
                <PeopleIcon />
              </AddinSide>
            </GroupBody>
            <GroupLabel>Suplementos</GroupLabel>
          </Group>
          <Group $w={320}>
            <GroupBody $pl={4}>
              <Big w={94} icon={<RecChartIcon />} lines={["Gráficos", "Recomendados"]} />
              <MiniGrid>
                {[0, 1, 2, 3, 4, 5, 6, 7].map((k) => (
                  <MiniChart key={k}>
                    <Mini kind={k} />
                    <Chev />
                  </MiniChart>
                ))}
              </MiniGrid>
              <Big w={38} icon={<GlobeIcon />} lines={["Mapas"]} chev="row" />
              <Big w={72} icon={<PivotChartIcon />} lines={["Gráfico", "Dinâmico"]} chev="inline" />
            </GroupBody>
            <GroupLabel $pr={16}>Gráficos</GroupLabel>
            <Launcher width="9" height="9" viewBox="0 0 9 9" fill="none" stroke="#a6a6a6">
              <path d="M.5 8V.5H8M3 3l5 5M8 4.500V8H4.500" />
            </Launcher>
          </Group>
          <Group $w={71}>
            <GroupBody>
              <Big w={70} icon={<Map3DIcon />} lines={["Mapas", "3D"]} chev="inline" />
            </GroupBody>
            <GroupLabel>Apresenta...</GroupLabel>
          </Group>
          <Group $w={151}>
            <GroupBody>
              <Big w={58} icon={<SparkLine />} lines={["Linhas"]} />
              <Big w={32} icon={<SparkColumn />} lines={["Colunas"]} />
              <Big w={60} icon={<SparkWin />} lines={["Ganho/", "Perda"]} />
            </GroupBody>
            <GroupLabel>Gráficos Sparkline</GroupLabel>
          </Group>
          <Group $w={163}>
            <GroupBody>
              <Big w={92} icon={<SlicerIcon />} lines={["Segmentação", "de Dados"]} />
              <Big w={56} icon={<TimelineIcon />} lines={["Linha", "Cronológica"]} />
            </GroupBody>
            <GroupLabel>Filtros</GroupLabel>
          </Group>
          <Group $w={62}>
            <GroupBody>
              <Big w={61} icon={<LinkIcon />} lines={["Ligação"]} chev="row" />
            </GroupBody>
            <GroupLabel>Ligações</GroupLabel>
          </Group>
          <Group $w={84}>
            <GroupBody>
              <Big w={83} icon={<CommentIcon />} lines={["Comentário"]} />
            </GroupBody>
            <GroupLabel>Comentários</GroupLabel>
          </Group>
          <Group $w={54}>
            <GroupBody>
              <Boxed w={53} icon={<TextAIcon />} label="Texto" />
            </GroupBody>
            <GroupLabel />
          </Group>
          <Group $w={66}>
            <GroupBody>
              <Boxed w={65} icon="Ω" label="Símbolos" />
            </GroupBody>
            <GroupLabel />
          </Group>
          <CollapseTab>
            <svg width="11" height="6" viewBox="0 0 11 6">
              <path d="M.5 5.500l5-4.500 5 4.500" fill="none" stroke="#555" />
            </svg>
          </CollapseTab>
        </Ribbon>

        <FormulaRow>
          <FormulaBox $w={101}>
            B3
            <Tri dir="d" c="#7a7a7a" />
          </FormulaBox>
          <Grip>⋮</Grip>
          <FxButtons $w={110}>
            <CloseIcon c="#b4b4b4" s={11} />
            <svg width="14" height="11" viewBox="0 0 14 11">
              <path d="M1 6l4 4 8-9" fill="none" stroke="#b4b4b4" strokeWidth="1.500" />
            </svg>
            <FxMark>fx</FxMark>
          </FxButtons>
          <FormulaBox>
            <FormulaText>2021</FormulaText>
            <svg width="11" height="7" viewBox="0 0 11 7">
              <path d="M1 1l4.500 4.500L10 1" fill="none" stroke="#c4c4c4" strokeWidth="1.500" />
            </svg>
          </FormulaBox>
        </FormulaRow>

        <Main>
          <Grid />
          <VScroll>
            <ScrollBtn>
              <Tri dir="u" />
            </ScrollBtn>
            <VThumb />
            <VTrack />
            <ScrollBtn>
              <Tri dir="d" />
            </ScrollBtn>
          </VScroll>
        </Main>

        <SheetBar>
          <SheetNav>
            <Tri dir="l" c="#c4c4c4" />
            <Tri dir="r" c="#c4c4c4" />
          </SheetNav>
          <SheetTab>Folha1</SheetTab>
          <AddSheet>
            <svg width="16" height="16" viewBox="0 0 16 16" fill="none" stroke="#707070">
              <circle cx="8" cy="8" r="7.300" />
              <path d="M8 4v8M4 8h8" strokeWidth="1.300" />
            </svg>
          </AddSheet>
          <HScrollArea>
            <Splitter>⋮</Splitter>
            <HBtn>
              <Tri dir="l" c="#333" />
            </HBtn>
            <HThumb />
            <HTrack />
            <HBtn>
              <Tri dir="r" c="#333" />
            </HBtn>
          </HScrollArea>
        </SheetBar>

        <StatusBar>
          <StatusText>Apontar</StatusText>
          <svg width="14" height="13" viewBox="0 0 14 13" fill="none" stroke="#555">
            <path d="M.5.500h12v3H.5zM.5 3.500v8.500h6M2.500 6h3M2.500 8.500h3" />
            <circle cx="10" cy="9" r="3.300" />
            <circle cx="10" cy="9" r="1.500" fill="#555" stroke="none" />
          </svg>
          <StatusRight>
            <ViewIcons>
              <svg width="14" height="13" viewBox="0 0 14 13" fill="none" stroke="#a8a8a8">
                <path d="M.5.500h13v12H.5zM.5 4.500h13M.5 8.500h13M5 .5v12M9.500 .5v12" />
              </svg>
              <svg width="14" height="13" viewBox="0 0 14 13" fill="none" stroke="#a8a8a8">
                <path d="M.5.500h13v12H.5zM3.500 3.500h7v6h-7zM5 5.500h4M5 7.500h4" />
              </svg>
              <svg width="14" height="13" viewBox="0 0 14 13" fill="none" stroke="#a8a8a8">
                <path d="M.5.500h13v12H.5zM.5 7.500h6.500V.5" />
              </svg>
            </ViewIcons>
            <Zoom>
              <svg width="9" height="1" viewBox="0 0 9 1">
                <path d="M0 .5h9" stroke="#a8a8a8" />
              </svg>
              <ZoomTrack />
              <svg width="9" height="9" viewBox="0 0 9 9">
                <path d="M0 4.500h9M4.500 0v9" stroke="#a8a8a8" />
              </svg>
            </Zoom>
            120%
          </StatusRight>
        </StatusBar>

        <Dialog>
          <DialogHead>
            Criar Tabela
            <HelpMark>?</HelpMark>
            <CloseMark width="11" height="11" viewBox="0 0 11 11">
              <path d="M.5.500l10 10M10.500.500l-10 10" stroke="#222" />
            </CloseMark>
          </DialogHead>
          <DialogBody>
            <DialogLabel>
              <Key>O</Key>nde estão os dados para a tabela?
            </DialogLabel>
            <RangeField>
              <RangeText>$B$3:$D$15</RangeText>
              <RangeBtn>
                <svg width="10" height="11" viewBox="0 0 10 11">
                  <path d="M5 0l4.500 5H7v3.500H3V5H.5zM0 9.500h10V11H0z" fill="#111" />
                </svg>
              </RangeBtn>
            </RangeField>
            <CheckRow>
              <CheckBox>
                <svg width="10" height="9" viewBox="0 0 10 9">
                  <path d="M1 4.500l3 3L9 1" fill="none" stroke="#333" strokeWidth="1.200" />
                </svg>
              </CheckBox>
              <span>
                A <Key>m</Key>inha tabela tem cabeçalhos
              </span>
            </CheckRow>
            <DialogButtons>
              <DlgButton $primary>OK</DlgButton>
              <DlgButton>Cancelar</DlgButton>
            </DialogButtons>
          </DialogBody>
        </Dialog>
      </Frame>
    </>
  );
}
